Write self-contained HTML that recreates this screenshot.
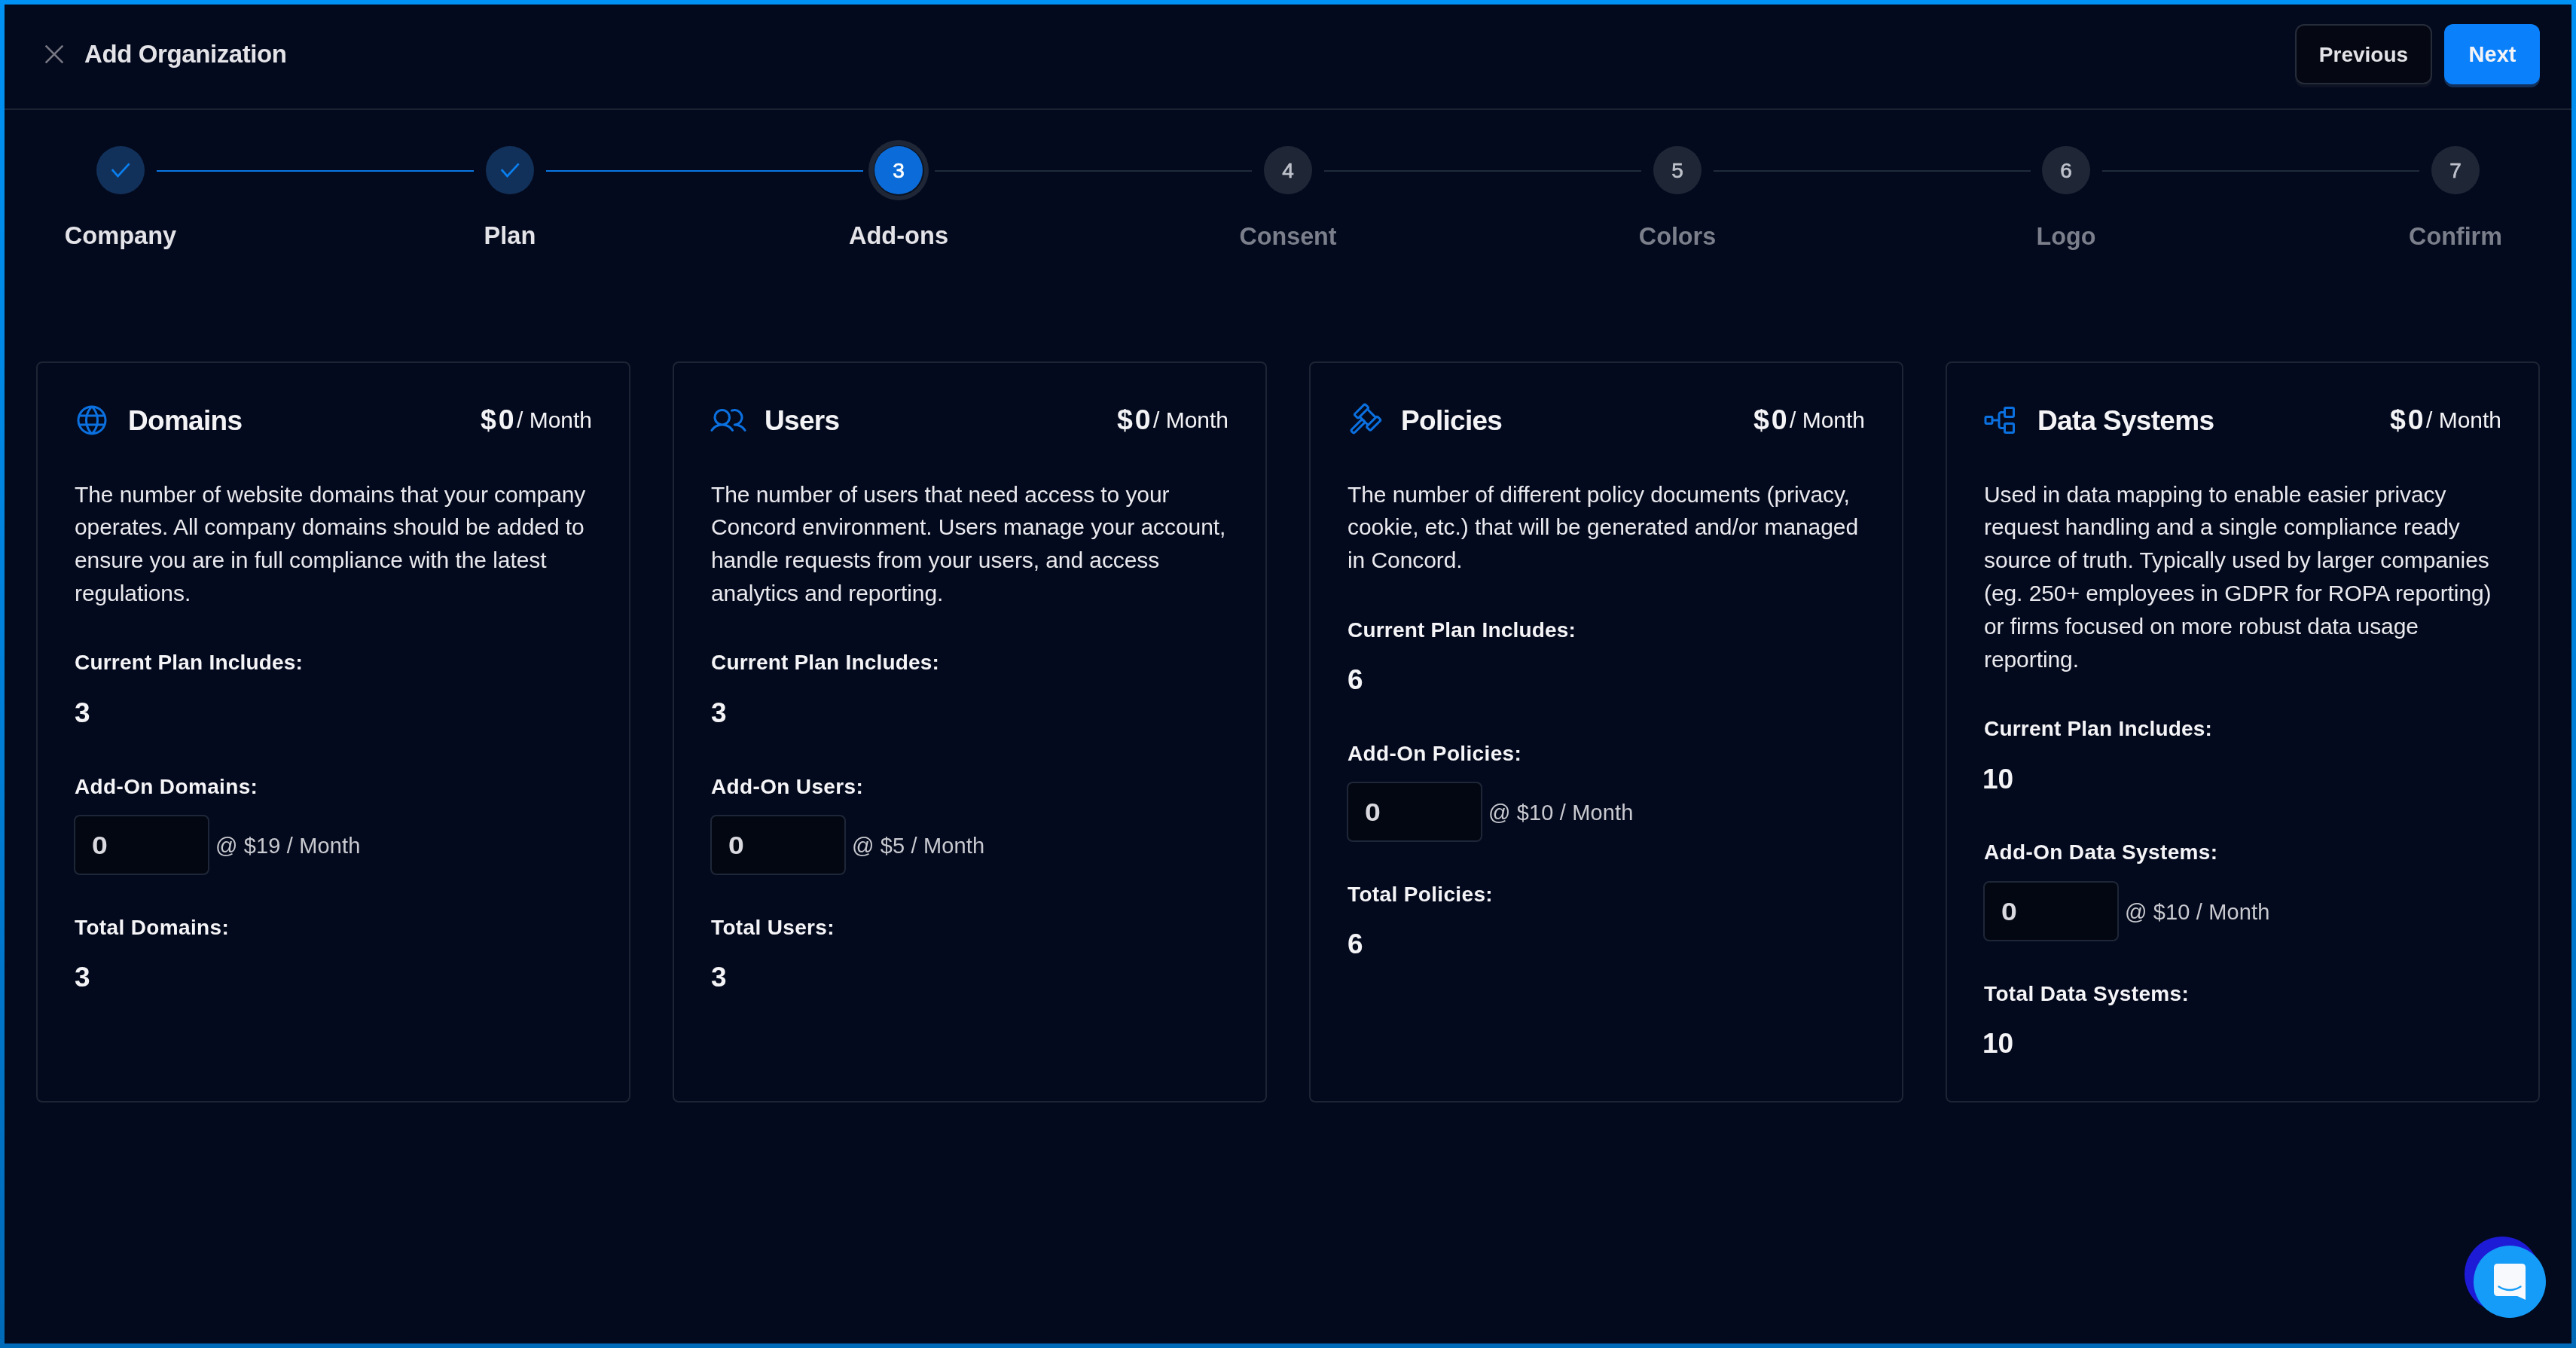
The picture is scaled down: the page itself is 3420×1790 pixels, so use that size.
<!DOCTYPE html>
<html><head><meta charset="utf-8"><style>
html,body{margin:0;padding:0;}
body{width:3420px;height:1790px;overflow:hidden;position:relative;background:#0a7fd6;font-family:"Liberation Sans", sans-serif;}
#frame{position:absolute;left:0;top:0;width:3420px;height:1790px;background:linear-gradient(180deg,#0092f4 0%,#0080d9 50%,#006ab8 100%);}
#win{position:absolute;left:6px;top:6px;width:3408px;height:1778px;background:#040a1d;overflow:hidden;}
.t{position:absolute;white-space:nowrap;will-change:transform;}
</style></head><body><div id="frame"></div>
<div style="position:absolute;left:0;top:0;width:3420px;height:1790px;">
<div id="win"></div>
<svg style="position:absolute;left:60px;top:60px" width="24" height="24" viewBox="0 0 24 24"><path d="M0.6 0.6L23.4 23.4M23.4 0.6L0.6 23.4" stroke="#777883" stroke-width="2.6" stroke-linecap="butt"/></svg>
<div class="t" style="left:112px;top:55.06px;font-size:33px;line-height:33px;color:#e3e3e8;font-weight:700;letter-spacing:-0.4px;">Add Organization</div>
<div style="position:absolute;left:3047px;top:32px;width:182px;height:80px;box-sizing:border-box;border:2px solid #262c3a;border-radius:12px;background:#050812;box-shadow:0 4px 0 #0d1322;"></div>
<div class="t" style="left:2537.5px;width:1200px;text-align:center;top:59.09px;font-size:28px;line-height:28px;color:#e3e3e8;font-weight:700;">Previous</div>
<div style="position:absolute;left:3245px;top:32px;width:127px;height:80px;border-radius:12px;background:#0a80fb;box-shadow:0 4px 0 #12305a;"></div>
<div class="t" style="left:2708.5px;width:1200px;text-align:center;top:58.25px;font-size:29px;line-height:29px;color:#f4f4f7;font-weight:700;">Next</div>
<div style="position:absolute;left:6px;top:144px;width:3408px;height:2px;background:#1b2331;"></div>
<div style="position:absolute;left:208px;top:226px;width:421px;height:2px;background:#0a76e4;"></div>
<div style="position:absolute;left:725px;top:226px;width:421px;height:2px;background:#0a76e4;"></div>
<div style="position:absolute;left:1241px;top:226px;width:421px;height:2px;background:#1f2a3b;"></div>
<div style="position:absolute;left:1758px;top:226px;width:421px;height:2px;background:#1f2a3b;"></div>
<div style="position:absolute;left:2275px;top:226px;width:421px;height:2px;background:#1f2a3b;"></div>
<div style="position:absolute;left:2791px;top:226px;width:421px;height:2px;background:#1f2a3b;"></div>
<div style="position:absolute;left:128.0px;top:194px;width:64px;height:64px;border-radius:50%;background:#12315a;"></div>
<svg style="position:absolute;left:128.0px;top:194px" width="64" height="64" viewBox="0 0 64 64"><path d="M20.8 31.2L28.5 40L43.6 23.4" fill="none" stroke="#0a7ff0" stroke-width="2.7" stroke-linecap="butt" stroke-linejoin="miter"/></svg>
<div class="t" style="left:-440.0px;width:1200px;text-align:center;top:297.40px;font-size:32.6px;line-height:32.6px;color:#e3e3e8;font-weight:700;">Company</div>
<div style="position:absolute;left:644.6666666666666px;top:194px;width:64px;height:64px;border-radius:50%;background:#12315a;"></div>
<svg style="position:absolute;left:644.6666666666666px;top:194px" width="64" height="64" viewBox="0 0 64 64"><path d="M20.8 31.2L28.5 40L43.6 23.4" fill="none" stroke="#0a7ff0" stroke-width="2.7" stroke-linecap="butt" stroke-linejoin="miter"/></svg>
<div class="t" style="left:76.66666666666663px;width:1200px;text-align:center;top:297.40px;font-size:32.6px;line-height:32.6px;color:#e3e3e8;font-weight:700;">Plan</div>
<div style="position:absolute;left:1153.3333333333333px;top:186px;width:80px;height:80px;border-radius:50%;background:#1f2737;"></div>
<div style="position:absolute;left:1159.8333333333333px;top:192.5px;width:67px;height:67px;border-radius:50%;background:#0b1322;"></div>
<div style="position:absolute;left:1161.3333333333333px;top:194px;width:64px;height:64px;border-radius:50%;background:#0b6cd9;"></div>
<div class="t" style="left:593.3333333333333px;width:1200px;text-align:center;top:212.99px;font-size:28px;line-height:28px;color:#ffffff;font-weight:400;-webkit-text-stroke:0.7px #ffffff;">3</div>
<div class="t" style="left:593.3333333333333px;width:1200px;text-align:center;top:297.40px;font-size:32.6px;line-height:32.6px;color:#e3e3e8;font-weight:700;">Add-ons</div>
<div style="position:absolute;left:1678.0px;top:194px;width:64px;height:64px;border-radius:50%;background:#1f2737;"></div>
<div class="t" style="left:1110.0px;width:1200px;text-align:center;top:212.99px;font-size:28px;line-height:28px;color:#bfc2cb;font-weight:400;-webkit-text-stroke:0.65px #bfc2cb;">4</div>
<div class="t" style="left:1110.0px;width:1200px;text-align:center;top:297.65px;font-size:32.3px;line-height:32.3px;color:#7b7f8b;font-weight:700;">Consent</div>
<div style="position:absolute;left:2194.6666666666665px;top:194px;width:64px;height:64px;border-radius:50%;background:#1f2737;"></div>
<div class="t" style="left:1626.6666666666665px;width:1200px;text-align:center;top:212.99px;font-size:28px;line-height:28px;color:#bfc2cb;font-weight:400;-webkit-text-stroke:0.65px #bfc2cb;">5</div>
<div class="t" style="left:1626.6666666666665px;width:1200px;text-align:center;top:297.65px;font-size:32.3px;line-height:32.3px;color:#7b7f8b;font-weight:700;">Colors</div>
<div style="position:absolute;left:2711.3333333333335px;top:194px;width:64px;height:64px;border-radius:50%;background:#1f2737;"></div>
<div class="t" style="left:2143.3333333333335px;width:1200px;text-align:center;top:212.99px;font-size:28px;line-height:28px;color:#bfc2cb;font-weight:400;-webkit-text-stroke:0.65px #bfc2cb;">6</div>
<div class="t" style="left:2143.3333333333335px;width:1200px;text-align:center;top:297.65px;font-size:32.3px;line-height:32.3px;color:#7b7f8b;font-weight:700;">Logo</div>
<div style="position:absolute;left:3228.0px;top:194px;width:64px;height:64px;border-radius:50%;background:#1f2737;"></div>
<div class="t" style="left:2660.0px;width:1200px;text-align:center;top:212.99px;font-size:28px;line-height:28px;color:#bfc2cb;font-weight:400;-webkit-text-stroke:0.65px #bfc2cb;">7</div>
<div class="t" style="left:2660.0px;width:1200px;text-align:center;top:297.65px;font-size:32.3px;line-height:32.3px;color:#7b7f8b;font-weight:700;">Confirm</div>
<div style="position:absolute;left:48px;top:480px;width:789px;height:984px;box-sizing:border-box;border:2px solid #1d2433;border-radius:8px;"></div>
<svg style="position:absolute;left:98px;top:534px" width="48" height="48" viewBox="0 0 256 256"><path fill="#0b70e0" d="M128,24h0A104,104,0,1,0,232,128,104.12,104.12,0,0,0,128,24Zm88,104a87.61,87.61,0,0,1-3.33,24H174.16a157.44,157.44,0,0,0,0-48h38.51A87.61,87.61,0,0,1,216,128ZM102,168H154a115.11,115.11,0,0,1-26,45A115.27,115.27,0,0,1,102,168Zm-3.9-16a140.84,140.84,0,0,1,0-48h59.88a140.84,140.84,0,0,1,0,48ZM40,128a87.61,87.61,0,0,1,3.33-24H81.84a157.44,157.44,0,0,0,0,48H43.33A87.61,87.61,0,0,1,40,128ZM154,88H102a115.11,115.11,0,0,1,26-45A115.27,115.27,0,0,1,154,88Zm52.33,0H170.71a135.28,135.28,0,0,0-22.3-45.6A88.29,88.29,0,0,1,206.37,88ZM107.59,42.4A135.28,135.28,0,0,0,85.29,88H49.63A88.29,88.29,0,0,1,107.59,42.4ZM49.63,168H85.29a135.28,135.28,0,0,0,22.3,45.6A88.29,88.29,0,0,1,49.63,168Zm98.780,45.6a135.28,135.28,0,0,0,22.3-45.6h35.66A88.29,88.29,0,0,1,148.41,213.6Z"/></svg>
<div class="t" style="left:170px;top:539.87px;font-size:37px;line-height:37px;color:#f4f4f7;font-weight:700;letter-spacing:-0.7px;">Domains</div>
<div class="t" style="left:638px;top:539.45px;font-size:37.5px;line-height:37.5px;color:#f4f4f7;font-weight:700;letter-spacing:3px;">$0</div>
<div class="t" style="left:686px;top:542.70px;font-size:30px;line-height:30px;color:#f4f4f7;font-weight:400;">/ Month</div>
<div class="t" style="left:99px;top:641.60px;font-size:30px;line-height:30px;color:#e9e9ee;font-weight:400;letter-spacing:-0.08px;">The number of website domains that your company</div>
<div class="t" style="left:99px;top:685.40px;font-size:30px;line-height:30px;color:#e9e9ee;font-weight:400;letter-spacing:-0.08px;">operates. All company domains should be added to</div>
<div class="t" style="left:99px;top:729.20px;font-size:30px;line-height:30px;color:#e9e9ee;font-weight:400;letter-spacing:-0.08px;">ensure you are in full compliance with the latest</div>
<div class="t" style="left:99px;top:773.00px;font-size:30px;line-height:30px;color:#e9e9ee;font-weight:400;letter-spacing:-0.08px;">regulations.</div>
<div class="t" style="left:99px;top:866.49px;font-size:28px;line-height:28px;color:#f5f5f8;font-weight:700;letter-spacing:0.2px;">Current Plan Includes:</div>
<div class="t" style="left:99px;top:928.07px;font-size:37px;line-height:37px;color:#f4f4f7;font-weight:700;">3</div>
<div class="t" style="left:99px;top:1030.79px;font-size:28px;line-height:28px;color:#f5f5f8;font-weight:700;letter-spacing:0.35px;">Add-On Domains:</div>
<div style="position:absolute;left:98px;top:1082.0px;width:180px;height:80px;box-sizing:border-box;border:2px solid #1e2738;border-radius:8px;background:#030712;"></div>
<div class="t" style="left:122px;top:1105.21px;font-size:34px;line-height:34px;color:#d9d9df;font-weight:700;transform:scaleX(1.1);transform-origin:left;">0</div>
<div class="t" style="left:286px;top:1109.15px;font-size:29px;line-height:29px;color:#c9cad0;font-weight:400;letter-spacing:0.15px;">@ $19 / Month</div>
<div class="t" style="left:99px;top:1218.19px;font-size:28px;line-height:28px;color:#f5f5f8;font-weight:700;letter-spacing:0.35px;">Total Domains:</div>
<div class="t" style="left:99px;top:1279.17px;font-size:37px;line-height:37px;color:#f4f4f7;font-weight:700;">3</div>
<div style="position:absolute;left:893px;top:480px;width:789px;height:984px;box-sizing:border-box;border:2px solid #1d2433;border-radius:8px;"></div>
<svg style="position:absolute;left:943px;top:534px" width="48" height="48" viewBox="0 0 256 256"><path fill="#0b70e0" d="M117.25,157.92a60,60,0,1,0-66.5,0A95.83,95.830,0,0,0,3.53,195.63a8,8,0,1,0,13.4,8.74,80,80,0,0,1,134.140,0,8,8,0,0,0,13.4-8.74A95.83,95.83,0,0,0,117.25,157.92ZM40,108a44,44,0,1,1,44,44A44.05,44.05,0,0,1,40,108Zm210.14,98.7a8,8,0,0,1-11.07-2.33A79.83,79.83,0,0,0,172,168a8,8,0,0,1,0-16,44,44,0,1,0-16.34-84.87,8,8,0,1,1-5.94-14.85,60,60,0,0,1,55.53,105.64,95.83,95.83,0,0,1,47.22,37.71A8,8,0,0,1,250.14,206.7Z"/></svg>
<div class="t" style="left:1015px;top:539.87px;font-size:37px;line-height:37px;color:#f4f4f7;font-weight:700;letter-spacing:-0.7px;">Users</div>
<div class="t" style="left:1483px;top:539.45px;font-size:37.5px;line-height:37.5px;color:#f4f4f7;font-weight:700;letter-spacing:3px;">$0</div>
<div class="t" style="left:1531px;top:542.70px;font-size:30px;line-height:30px;color:#f4f4f7;font-weight:400;">/ Month</div>
<div class="t" style="left:944px;top:641.60px;font-size:30px;line-height:30px;color:#e9e9ee;font-weight:400;letter-spacing:-0.08px;">The number of users that need access to your</div>
<div class="t" style="left:944px;top:685.40px;font-size:30px;line-height:30px;color:#e9e9ee;font-weight:400;letter-spacing:-0.08px;">Concord environment. Users manage your account,</div>
<div class="t" style="left:944px;top:729.20px;font-size:30px;line-height:30px;color:#e9e9ee;font-weight:400;letter-spacing:-0.08px;">handle requests from your users, and access</div>
<div class="t" style="left:944px;top:773.00px;font-size:30px;line-height:30px;color:#e9e9ee;font-weight:400;letter-spacing:-0.08px;">analytics and reporting.</div>
<div class="t" style="left:944px;top:866.49px;font-size:28px;line-height:28px;color:#f5f5f8;font-weight:700;letter-spacing:0.2px;">Current Plan Includes:</div>
<div class="t" style="left:944px;top:928.07px;font-size:37px;line-height:37px;color:#f4f4f7;font-weight:700;">3</div>
<div class="t" style="left:944px;top:1030.79px;font-size:28px;line-height:28px;color:#f5f5f8;font-weight:700;letter-spacing:0.35px;">Add-On Users:</div>
<div style="position:absolute;left:943px;top:1082.0px;width:180px;height:80px;box-sizing:border-box;border:2px solid #1e2738;border-radius:8px;background:#030712;"></div>
<div class="t" style="left:967px;top:1105.21px;font-size:34px;line-height:34px;color:#d9d9df;font-weight:700;transform:scaleX(1.1);transform-origin:left;">0</div>
<div class="t" style="left:1131px;top:1109.15px;font-size:29px;line-height:29px;color:#c9cad0;font-weight:400;letter-spacing:0.15px;">@ $5 / Month</div>
<div class="t" style="left:944px;top:1218.19px;font-size:28px;line-height:28px;color:#f5f5f8;font-weight:700;letter-spacing:0.35px;">Total Users:</div>
<div class="t" style="left:944px;top:1279.17px;font-size:37px;line-height:37px;color:#f4f4f7;font-weight:700;">3</div>
<div style="position:absolute;left:1738px;top:480px;width:789px;height:984px;box-sizing:border-box;border:2px solid #1d2433;border-radius:8px;"></div>
<svg style="position:absolute;left:1788px;top:534px" width="48" height="48" viewBox="0 0 256 256"><g transform="rotate(-45)" fill="none" stroke="#0b70e0" stroke-width="16" stroke-linejoin="round">
<rect x="-25" y="99.5" width="106.5" height="38.6" rx="9"/>
<rect x="-25" y="222" width="106.5" height="38.6" rx="9"/>
<path d="M-8 138V222M68 138V222"/>
<rect x="-122" y="162" width="114" height="30" rx="12"/>
</g>
</svg>
<div class="t" style="left:1860px;top:539.87px;font-size:37px;line-height:37px;color:#f4f4f7;font-weight:700;letter-spacing:-0.7px;">Policies</div>
<div class="t" style="left:2328px;top:539.45px;font-size:37.5px;line-height:37.5px;color:#f4f4f7;font-weight:700;letter-spacing:3px;">$0</div>
<div class="t" style="left:2376px;top:542.70px;font-size:30px;line-height:30px;color:#f4f4f7;font-weight:400;">/ Month</div>
<div class="t" style="left:1789px;top:641.60px;font-size:30px;line-height:30px;color:#e9e9ee;font-weight:400;letter-spacing:-0.08px;">The number of different policy documents (privacy,</div>
<div class="t" style="left:1789px;top:685.40px;font-size:30px;line-height:30px;color:#e9e9ee;font-weight:400;letter-spacing:-0.08px;">cookie, etc.) that will be generated and/or managed</div>
<div class="t" style="left:1789px;top:729.20px;font-size:30px;line-height:30px;color:#e9e9ee;font-weight:400;letter-spacing:-0.08px;">in Concord.</div>
<div class="t" style="left:1789px;top:822.69px;font-size:28px;line-height:28px;color:#f5f5f8;font-weight:700;letter-spacing:0.2px;">Current Plan Includes:</div>
<div class="t" style="left:1789px;top:884.27px;font-size:37px;line-height:37px;color:#f4f4f7;font-weight:700;">6</div>
<div class="t" style="left:1789px;top:986.99px;font-size:28px;line-height:28px;color:#f5f5f8;font-weight:700;letter-spacing:0.35px;">Add-On Policies:</div>
<div style="position:absolute;left:1788px;top:1038.2px;width:180px;height:80px;box-sizing:border-box;border:2px solid #1e2738;border-radius:8px;background:#030712;"></div>
<div class="t" style="left:1812px;top:1061.41px;font-size:34px;line-height:34px;color:#d9d9df;font-weight:700;transform:scaleX(1.1);transform-origin:left;">0</div>
<div class="t" style="left:1976px;top:1065.35px;font-size:29px;line-height:29px;color:#c9cad0;font-weight:400;letter-spacing:0.15px;">@ $10 / Month</div>
<div class="t" style="left:1789px;top:1174.39px;font-size:28px;line-height:28px;color:#f5f5f8;font-weight:700;letter-spacing:0.35px;">Total Policies:</div>
<div class="t" style="left:1789px;top:1235.37px;font-size:37px;line-height:37px;color:#f4f4f7;font-weight:700;">6</div>
<div style="position:absolute;left:2583px;top:480px;width:789px;height:984px;box-sizing:border-box;border:2px solid #1d2433;border-radius:8px;"></div>
<svg style="position:absolute;left:2633px;top:534px" width="48" height="48" viewBox="0 0 256 256"><path fill="#0b70e0" d="M160,112h48a16,16,0,0,0,16-16V48a16,16,0,0,0-16-16H160a16,16,0,0,0-16,16V64H128a24,24,0,0,0-24,24v32H72v-8A16,16,0,0,0,56,96H24A16,16,0,0,0,8,112v32a16,16,0,0,0,16,16H56a16,16,0,0,0,16-16v-8h32v32a24,24,0,0,0,24,24h16v16a16,16,0,0,0,16,16h48a16,16,0,0,0,16-16V160a16,16,0,0,0-16-16H160a16,16,0,0,0-16,16v16H128a8,8,0,0,1-8-8V88a8,8,0,0,1,8-8h16V96A16,16,0,0,0,160,112ZM56,144H24V112H56v32Zm104,16h48v48H160Zm0-112h48V96H160Z"/></svg>
<div class="t" style="left:2705px;top:539.87px;font-size:37px;line-height:37px;color:#f4f4f7;font-weight:700;letter-spacing:-0.7px;">Data Systems</div>
<div class="t" style="left:3173px;top:539.45px;font-size:37.5px;line-height:37.5px;color:#f4f4f7;font-weight:700;letter-spacing:3px;">$0</div>
<div class="t" style="left:3221px;top:542.70px;font-size:30px;line-height:30px;color:#f4f4f7;font-weight:400;">/ Month</div>
<div class="t" style="left:2634px;top:641.60px;font-size:30px;line-height:30px;color:#e9e9ee;font-weight:400;letter-spacing:-0.08px;">Used in data mapping to enable easier privacy</div>
<div class="t" style="left:2634px;top:685.40px;font-size:30px;line-height:30px;color:#e9e9ee;font-weight:400;letter-spacing:-0.08px;">request handling and a single compliance ready</div>
<div class="t" style="left:2634px;top:729.20px;font-size:30px;line-height:30px;color:#e9e9ee;font-weight:400;letter-spacing:-0.08px;">source of truth. Typically used by larger companies</div>
<div class="t" style="left:2634px;top:773.00px;font-size:30px;line-height:30px;color:#e9e9ee;font-weight:400;letter-spacing:-0.08px;">(eg. 250+ employees in GDPR for ROPA reporting)</div>
<div class="t" style="left:2634px;top:816.80px;font-size:30px;line-height:30px;color:#e9e9ee;font-weight:400;letter-spacing:-0.08px;">or firms focused on more robust data usage</div>
<div class="t" style="left:2634px;top:860.60px;font-size:30px;line-height:30px;color:#e9e9ee;font-weight:400;letter-spacing:-0.08px;">reporting.</div>
<div class="t" style="left:2634px;top:954.09px;font-size:28px;line-height:28px;color:#f5f5f8;font-weight:700;letter-spacing:0.2px;">Current Plan Includes:</div>
<div class="t" style="left:2632px;top:1015.67px;font-size:37px;line-height:37px;color:#f4f4f7;font-weight:700;">10</div>
<div class="t" style="left:2634px;top:1118.39px;font-size:28px;line-height:28px;color:#f5f5f8;font-weight:700;letter-spacing:0.35px;">Add-On Data Systems:</div>
<div style="position:absolute;left:2633px;top:1169.6px;width:180px;height:80px;box-sizing:border-box;border:2px solid #1e2738;border-radius:8px;background:#030712;"></div>
<div class="t" style="left:2657px;top:1192.81px;font-size:34px;line-height:34px;color:#d9d9df;font-weight:700;transform:scaleX(1.1);transform-origin:left;">0</div>
<div class="t" style="left:2821px;top:1196.75px;font-size:29px;line-height:29px;color:#c9cad0;font-weight:400;letter-spacing:0.15px;">@ $10 / Month</div>
<div class="t" style="left:2634px;top:1305.79px;font-size:28px;line-height:28px;color:#f5f5f8;font-weight:700;letter-spacing:0.35px;">Total Data Systems:</div>
<div class="t" style="left:2632px;top:1366.77px;font-size:37px;line-height:37px;color:#f4f4f7;font-weight:700;">10</div>
<div style="position:absolute;left:3272px;top:1642px;width:100px;height:100px;border-radius:50%;background:#1d1bd6;"></div>
<div style="position:absolute;left:3284px;top:1654px;width:96px;height:96px;border-radius:50%;background:#149cf8;"></div>
<svg style="position:absolute;left:3308px;top:1676px" width="48" height="52" viewBox="0 0 48 52"><path d="M8 2H40Q45 2 45 7V50L34 45H8Q3 45 3 40V7Q3 2 8 2Z" fill="#f8f9fc"/><path d="M9.5 32.5Q24 41.5 38.5 32.5" fill="none" stroke="#149cf8" stroke-width="2.4" stroke-linecap="round"/></svg>
</div></body></html>
